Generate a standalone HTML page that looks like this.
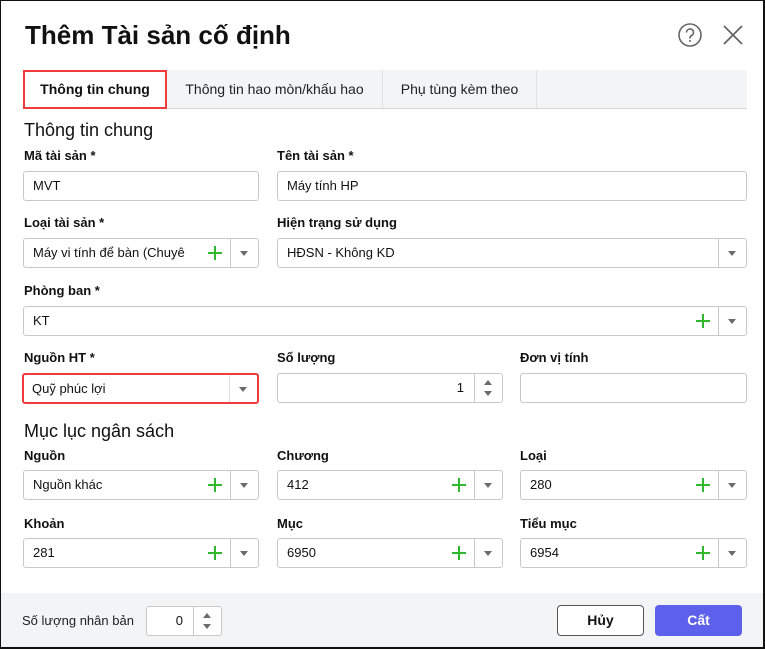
<!DOCTYPE html>
<html><head><meta charset="utf-8"><style>
*{box-sizing:border-box;margin:0;padding:0}
body{width:765px;height:649px;background:#fff;font-family:"Liberation Sans",Arial,sans-serif;color:#212121;position:relative;overflow:hidden}
.frame{position:absolute;left:0;top:0;width:765px;height:649px;border:1px solid #111;border-right-width:2px;border-bottom-width:2px;pointer-events:none;z-index:10}
.a{position:absolute}
.title{left:25px;top:20px;font-size:26px;font-weight:bold;color:#111}
.h2{font-size:18px;color:#111}
.lbl{font-size:13px;font-weight:bold;color:#111}
.inp{position:absolute;height:30px;border:1px solid #c9c9c9;border-radius:3px;background:#fff;font-size:13px;line-height:28px;padding-left:9px;color:#111}
.dd{position:absolute;right:0;top:0;width:28px;height:28px;border-left:1px solid #c9c9c9}
.dd:after{content:"";position:absolute;left:9px;top:12px;border-left:4.5px solid transparent;border-right:4.5px solid transparent;border-top:5px solid #6b6b6b}
.plus{position:absolute;top:7px;width:14px;height:14px}
.plus:before{content:"";position:absolute;left:6px;top:0;width:2px;height:14px;background:#2eb82e}
.plus:after{content:"";position:absolute;left:0;top:6px;width:14px;height:2px;background:#2eb82e}
.spin{position:absolute;right:0;top:0;width:28px;height:28px;border-left:1px solid #c9c9c9}
.spin:before{content:"";position:absolute;left:9px;top:6px;border-left:4.5px solid transparent;border-right:4.5px solid transparent;border-bottom:5px solid #6b6b6b}
.spin:after{content:"";position:absolute;left:9px;top:17px;border-left:4.5px solid transparent;border-right:4.5px solid transparent;border-top:5px solid #6b6b6b}
</style></head><body>
<div class="frame"></div>
<div class="a title">Thêm Tài sản cố định</div>
<svg class="a" style="left:677px;top:22px" width="26" height="26" viewBox="0 0 26 26"><circle cx="13" cy="13" r="11" fill="none" stroke="#666" stroke-width="1.6"/><path d="M9.5 10.5a3.5 3.5 0 1 1 5 3.1c-1 .5-1.5 1.1-1.5 2.2v.7" fill="none" stroke="#666" stroke-width="1.6"/><circle cx="13" cy="19" r="1" fill="#666"/></svg>
<svg class="a" style="left:722px;top:24px" width="22" height="22" viewBox="0 0 22 22"><path d="M2 2L20 20M20 2L2 20" stroke="#666" stroke-width="1.8"/></svg>

<div class="a" style="left:23px;top:70px;width:724px;height:39px;background:#f3f4f6;border-bottom:1px solid #d6d6d6"></div>
<div class="a" style="left:23px;top:70px;width:144px;height:39px;background:#fff;border:2px solid #ee3b3b;font-size:14px;font-weight:bold;line-height:35px;text-align:center;color:#111">Thông tin chung</div>
<div class="a" style="left:167px;top:70px;width:216px;height:38px;border-right:1px solid #e2e2e2;font-size:14px;line-height:38px;text-align:center;color:#222">Thông tin hao mòn/khấu hao</div>
<div class="a" style="left:383px;top:70px;width:154px;height:38px;border-right:1px solid #e2e2e2;font-size:14px;line-height:38px;text-align:center;color:#222">Phụ tùng kèm theo</div>

<div class="a h2" style="left:24px;top:120px">Thông tin chung</div>
<div class="a lbl" style="left:24px;top:148px">Mã tài sản *</div>
<div class="a lbl" style="left:277px;top:148px">Tên tài sản *</div>
<div class="inp" style="left:23px;top:171px;width:236px">MVT</div>
<div class="inp" style="left:277px;top:171px;width:470px">Máy tính HP</div>

<div class="a lbl" style="left:24px;top:215px">Loại tài sản *</div>
<div class="a lbl" style="left:277px;top:215px">Hiện trạng sử dụng</div>
<div class="inp" style="left:23px;top:238px;width:236px">Máy vi tính để bàn (Chuyê<div class="plus" style="left:184px"></div><div class="dd"></div></div>
<div class="inp" style="left:277px;top:238px;width:470px">HĐSN - Không KD<div class="dd"></div></div>

<div class="a lbl" style="left:24px;top:283px">Phòng ban *</div>
<div class="inp" style="left:23px;top:306px;width:724px">KT<div class="plus" style="left:672px"></div><div class="dd"></div></div>

<div class="a lbl" style="left:24px;top:350px">Nguồn HT *</div>
<div class="a lbl" style="left:277px;top:350px">Số lượng</div>
<div class="a lbl" style="left:520px;top:350px">Đơn vị tính</div>
<div class="inp" style="left:22px;top:373px;width:237px;height:31px;border:2px solid #ee3b3b;padding-left:8px;line-height:27px">Quỹ phúc lợi<div class="dd" style="top:0;height:27px;border-color:#ddd"></div></div>
<div class="inp" style="left:277px;top:373px;width:226px;text-align:right;padding-right:38px">1<div class="spin"></div></div>
<div class="inp" style="left:520px;top:373px;width:227px"></div>

<div class="a h2" style="left:24px;top:421px">Mục lục ngân sách</div>
<div class="a lbl" style="left:24px;top:448px">Nguồn</div>
<div class="a lbl" style="left:277px;top:448px">Chương</div>
<div class="a lbl" style="left:520px;top:448px">Loại</div>
<div class="inp" style="left:23px;top:470px;width:236px">Nguồn khác<div class="plus" style="left:184px"></div><div class="dd"></div></div>
<div class="inp" style="left:277px;top:470px;width:226px">412<div class="plus" style="left:174px"></div><div class="dd"></div></div>
<div class="inp" style="left:520px;top:470px;width:227px">280<div class="plus" style="left:175px"></div><div class="dd"></div></div>

<div class="a lbl" style="left:24px;top:516px">Khoản</div>
<div class="a lbl" style="left:277px;top:516px">Mục</div>
<div class="a lbl" style="left:520px;top:516px">Tiểu mục</div>
<div class="inp" style="left:23px;top:538px;width:236px">281<div class="plus" style="left:184px"></div><div class="dd"></div></div>
<div class="inp" style="left:277px;top:538px;width:226px">6950<div class="plus" style="left:174px"></div><div class="dd"></div></div>
<div class="inp" style="left:520px;top:538px;width:227px">6954<div class="plus" style="left:175px"></div><div class="dd"></div></div>

<div class="a" style="left:0;top:593px;width:765px;height:56px;background:#f3f4f6"></div>
<div class="a" style="left:22px;top:613px;font-size:13px;color:#222">Số lượng nhân bản</div>
<div class="inp" style="left:146px;top:606px;width:76px;text-align:right;padding-right:38px;line-height:28px">0<div class="spin"></div></div>
<div class="a" style="left:557px;top:605px;width:87px;height:31px;border:1px solid #555;border-radius:4px;background:#fff;font-size:14px;font-weight:bold;text-align:center;line-height:29px;color:#111">Hủy</div>
<div class="a" style="left:655px;top:605px;width:87px;height:31px;border-radius:4px;background:#5c60ea;font-size:14px;font-weight:bold;text-align:center;line-height:31px;color:#fff">Cất</div>
</body></html>
